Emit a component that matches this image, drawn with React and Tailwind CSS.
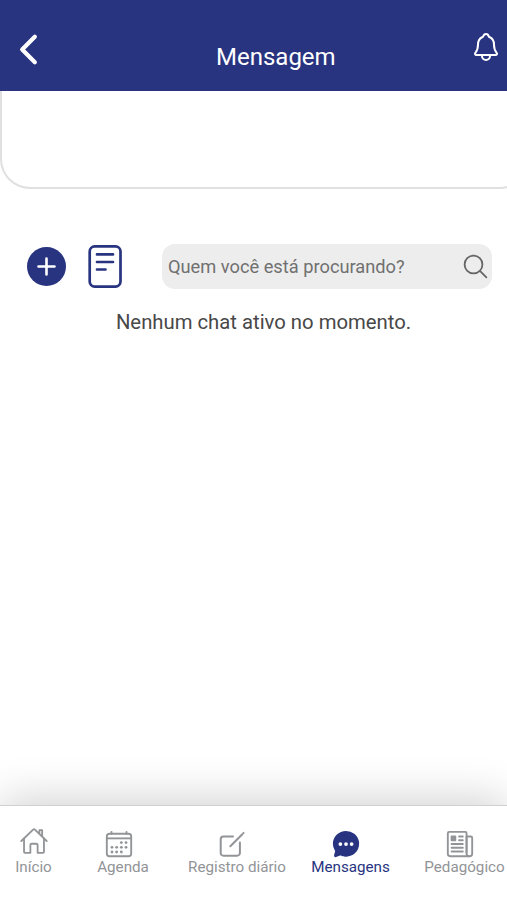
import React, { useState } from 'react';
import {
  IoCalendarOutline,
  IoChatbubbleEllipses,
  IoChevronBack,
  IoHomeOutline,
  IoNewspaperOutline,
  IoNotificationsOutline,
  IoSearchOutline
} from 'react-icons/io5';

const NotesIcon = () => (
  <svg width="34" height="43" viewBox="0 0 34 43" fill="none" stroke="#28347f" strokeLinecap="round">
    <rect x="1.7" y="1.4" width="30.8" height="40.2" rx="5" strokeWidth="2.7" />
    <path d="M9 9.4h16M9 17h16M9 24.5h8.5" strokeWidth="2.7" />
  </svg>
);

const EditIcon = ({ className }) => (
  <svg
    width="30"
    height="30"
    viewBox="0 0 30 30"
    fill="none"
    stroke="currentColor"
    strokeWidth="2"
    strokeLinecap="round"
    strokeLinejoin="round"
    className={className}
  >
    <path d="M17 7.5H7.5a2.8 2.8 0 0 0-2.8 2.8v13.6a2.8 2.8 0 0 0 2.8 2.8h13.6a2.8 2.8 0 0 0 2.8-2.8V13.4" />
    <path d="M14.3 17.2 26.3 5.2M27.5 4l.1-.1" />
  </svg>
);

const tabs = [
  { id: 'inicio', label: 'Início', icon: IoHomeOutline, item: 'ml-[15px] w-[37px]', iconClass: '-mt-[3px] mb-[3px] px-[0.5px]' },
  { id: 'agenda', label: 'Agenda', icon: IoCalendarOutline, item: 'ml-[45px] w-[52px]', iconClass: 'mr-[9px]' },
  { id: 'registro', label: 'Registro diário', icon: EditIcon, item: 'ml-[39px] w-[98px]', iconClass: 'mr-[12px]' },
  { id: 'mensagens', label: 'Mensagens', icon: IoChatbubbleEllipses, item: 'ml-[25px] w-[79px]', iconClass: 'mr-[9px]' },
  { id: 'pedagogico', label: 'Pedagógico', icon: IoNewspaperOutline, item: 'ml-[34px] w-[81px]', iconClass: 'mr-[9px]' }
];

const App = () => {
  const [activeTab, setActiveTab] = useState('mensagens');
  const [search, setSearch] = useState('');

  return (
    <div className="flex h-[900px] w-[507px] flex-col overflow-hidden bg-white font-['Roboto',sans-serif]">
      <header className="flex h-[91px] shrink-0 items-start bg-[#283480] text-white">
        <button className="ml-[6px] mt-[27px]" aria-label="Voltar">
          <IoChevronBack size={45} />
        </button>
        <h1 className="ml-[165px] mt-[42px] text-[24px] leading-[31px] whitespace-nowrap">Mensagem</h1>
        <button className="mr-[5px] mt-[31px] ml-auto" aria-label="Notificações">
          <IoNotificationsOutline size={32} />
        </button>
      </header>

      <div className="h-[98px] w-[530px] shrink-0 rounded-b-[30px] border-x-2 border-b-2 border-t-0 border-[#e0e0e0]" />

      <main className="flex flex-1 flex-col">
        <div className="mt-[55px] flex h-[45px] items-center">
          <button
            className="ml-[27px] flex size-[39px] items-center justify-center rounded-full bg-[#28347f]"
            aria-label="Nova conversa"
          >
            <svg width="19" height="19" viewBox="0 0 19 19" stroke="white" strokeWidth="2.6" strokeLinecap="round">
              <path d="M9.5 1.5v16M1.5 9.5h16" />
            </svg>
          </button>
          <button className="ml-[22px]" aria-label="Anotações">
            <NotesIcon />
          </button>
          <label className="ml-[40px] flex h-[45px] w-[330px] items-center rounded-[13px] bg-[#ededed]">
            <input
              type="text"
              value={search}
              onChange={(e) => setSearch(e.target.value)}
              placeholder="Quem você está procurando?"
              className="ml-[6px] w-[293px] text-[18.25px] outline-none placeholder:text-[#707070]"
            />
            <IoSearchOutline size={29} className="text-[#666666]" />
          </label>
        </div>
        <p className="mt-[18px] pl-[20px] text-center text-[20.3px] leading-[30px] text-[#484848]">
          Nenhum chat ativo no momento.
        </p>
      </main>

      <nav className="flex h-[95px] shrink-0 items-start border-t border-[#d0d0d0] bg-white pt-[23px] shadow-[0_-6px_44px_rgba(0,0,0,0.18)]">
        {tabs.map(({ id, label, icon: Icon, item, iconClass }) => (
          <button
            key={id}
            onClick={() => setActiveTab(id)}
            className={`flex shrink-0 flex-col items-center whitespace-nowrap text-[15.2px] leading-[18px] ${item} ${
              activeTab === id ? 'text-[#28347f]' : 'text-[#929497]'
            }`}
          >
            <Icon size={30} className={`${iconClass} shrink-0`} />
            <span className="-mt-px">{label}</span>
          </button>
        ))}
      </nav>
    </div>
  );
};

export default App;
